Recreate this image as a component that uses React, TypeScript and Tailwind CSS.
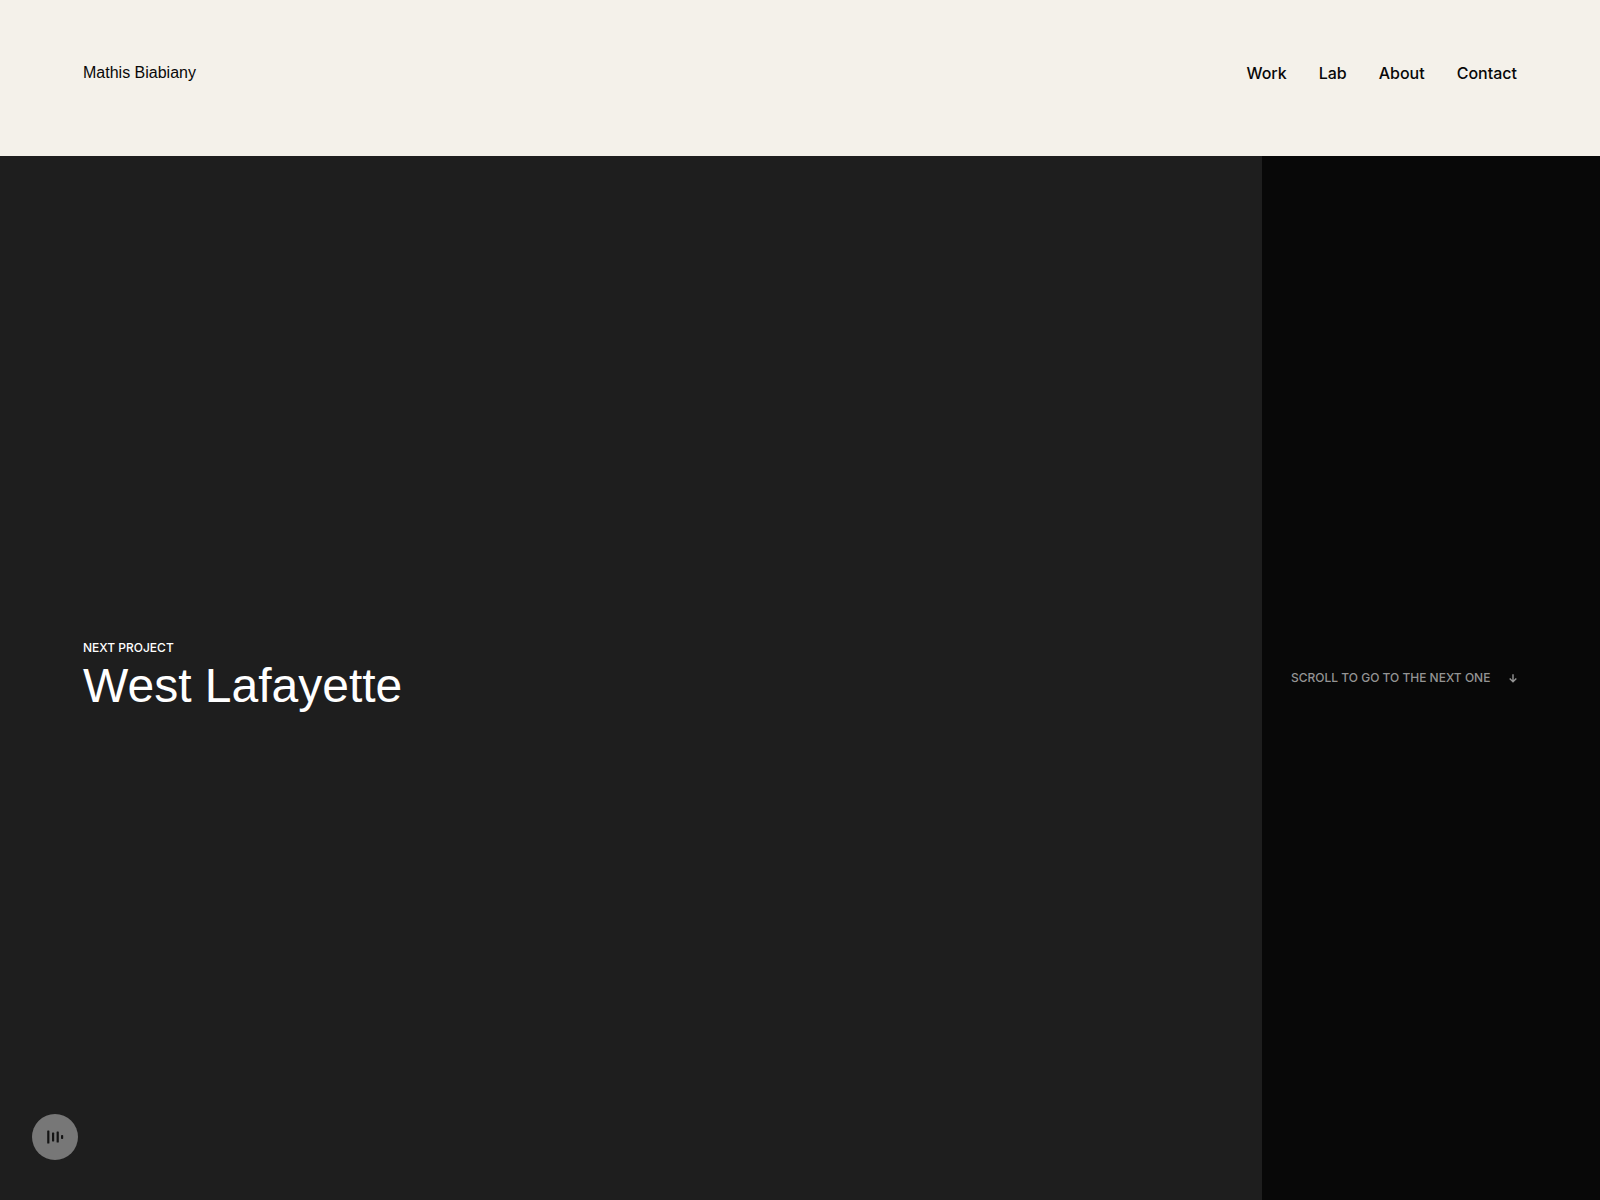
const links = ["Work", "Lab", "About", "Contact"];

function Header() {
  return (
    <header className="flex h-[156px] shrink-0 items-start justify-between bg-[#f4f1ea] px-[83px] pt-[61px] text-base leading-6 font-medium text-[#080808]">
      <a href="#home" className="font-['Liberation_Sans',sans-serif]">
        Mathis Biabiany
      </a>
      <nav className="flex gap-8">
        {links.map((link) => (
          <a key={link} href={`#${link.toLowerCase()}`}>
            {link}
          </a>
        ))}
      </nav>
    </header>
  );
}

function SoundButton() {
  return (
    <button
      type="button"
      aria-label="Toggle sound"
      className="fixed bottom-10 left-8 flex h-[46px] w-[46px] items-center justify-center rounded-full bg-[#777777] text-[#141414]"
    >
      <svg width="18" height="14" viewBox="0 0 18 14" fill="currentColor">
        <rect x="1.2" y="0.5" width="2.2" height="13" rx="0.6" />
        <rect x="6" y="2.6" width="2.2" height="8.8" rx="0.6" />
        <rect x="10.6" y="1.4" width="2.2" height="11.2" rx="0.6" />
        <rect x="15" y="5" width="2.2" height="4" rx="0.8" />
      </svg>
    </button>
  );
}

export default function App() {
  return (
    <div className="flex min-h-screen flex-col font-['Inter',sans-serif]">
      <Header />
      <main className="flex flex-1 bg-[#1e1e1e]">
        <section className="flex flex-1 flex-col justify-center pl-[83px] text-white">
          <p className="text-xs leading-4 font-medium uppercase">Next project</p>
          <h1 className="font-['Liberation_Sans',sans-serif] text-5xl leading-[60px]">
            West Lafayette
          </h1>
        </section>
        <aside className="flex w-[338px] shrink-0 items-center justify-between bg-[#080808] pr-[83px] pl-[29px] text-xs leading-4 font-medium text-[#949494] uppercase">
          <span>Scroll to go to the next one</span>
          <svg
            width="8"
            height="9"
            viewBox="0 0 8 9"
            fill="none"
            stroke="currentColor"
            strokeWidth="1.4"
          >
            <path d="M4 0.3V7.8M0.7 4.5L4 7.8L7.3 4.5" />
          </svg>
        </aside>
      </main>
      <SoundButton />
    </div>
  );
}
